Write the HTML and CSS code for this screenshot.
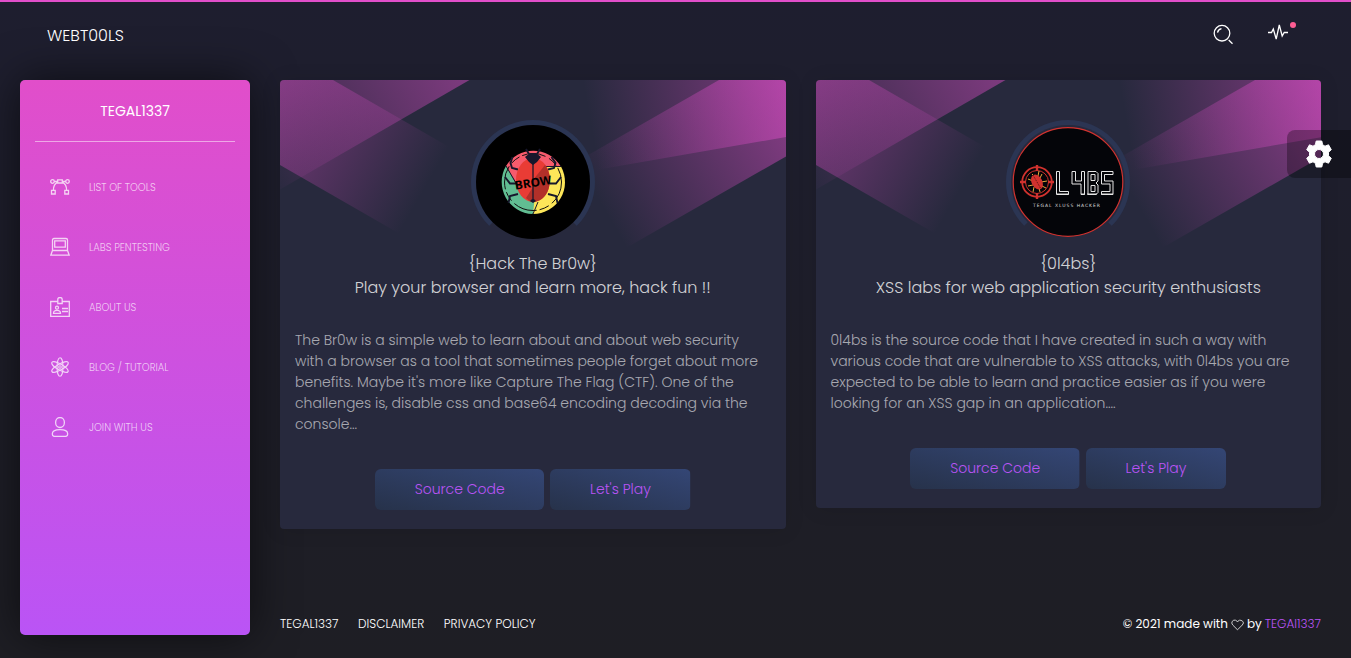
FILE: index.html
```
<!DOCTYPE html>
<html lang="en">
<head>
<meta charset="utf-8">
<title>WEBT00LS</title>
<link rel="stylesheet" href="styles.css">
</head>
<body>
<svg class="defs" width="0" height="0">
  <defs>
    <linearGradient id="beamA" gradientUnits="userSpaceOnUse" x1="-70" y1="0" x2="180" y2="0" gradientTransform="rotate(30)"><stop offset="0" stop-color="#e14eca" stop-opacity=".6"/><stop offset="1" stop-color="#e14eca" stop-opacity="0"/></linearGradient>
    <linearGradient id="beamB" gradientUnits="userSpaceOnUse" x1="228" y1="0" x2="-65" y2="0" gradientTransform="rotate(-30)"><stop offset="0" stop-color="#e14eca" stop-opacity=".6"/><stop offset="1" stop-color="#e14eca" stop-opacity="0"/></linearGradient>
    <linearGradient id="beamC" gradientUnits="userSpaceOnUse" x1="466" y1="0" x2="216" y2="0" gradientTransform="rotate(-30)"><stop offset="0" stop-color="#e14eca" stop-opacity=".6"/><stop offset="1" stop-color="#e14eca" stop-opacity="0"/></linearGradient>
    <linearGradient id="beamD" gradientUnits="userSpaceOnUse" x1="548" y1="0" x2="298" y2="0" gradientTransform="rotate(-10)"><stop offset="0" stop-color="#e14eca" stop-opacity=".6"/><stop offset="1" stop-color="#e14eca" stop-opacity="0"/></linearGradient>
    <g id="beams">
      <path fill="url(#beamA)" d="M0 0H53L170 67.500L120 154L0 85Z"/>
      <path fill="url(#beamB)" d="M0 0H189.500L0 109.500Z"/>
      <path fill="url(#beamC)" d="M439 0H506V76.500L346 168L296 82Z"/>
      <path fill="url(#beamD)" d="M303 0H506V57L319 89.500Z"/>
    </g>
  </defs>
</svg>
<header class="topbar">
  <a class="brand">WEBT00LS</a>
  <div class="actions">
    <svg class="search" width="22" height="22" viewBox="0 0 22 22"><circle cx="9" cy="9.200" r="7.800"/><path d="M4.500 8.700A5 5 0 0 1 8.500 4.700M15.700 16L19.500 19.700"/></svg>
    <div class="pulse">
      <svg width="22" height="20" viewBox="0 0 22 20"><path d="M1 10.500H4.500L6.300 7L9.200 17L12.300 3L15.200 14L17.200 10.500H21"/></svg>
      <i class="dot"></i>
    </div>
  </div>
</header>
<div class="shell">
  <aside class="sidebar">
    <div class="logo"><span>TEGAL1337</span></div>
    <nav>
      <a><svg viewBox="0 0 20 20"><circle cx="2.500" cy="4.500" r="1.800"/><circle cx="17.500" cy="4.500" r="1.800"/><path d="M7.700 2.800h4.600v3.200H7.700zM1.500 13.300h3.700V17H1.500zM14.800 13.300h3.700V17h-3.700zM4.200 4.500h3.500M12.300 4.500h3.500M3.400 13.300C3.400 8.800 5 6.500 7.700 5.200M16.600 13.300C16.600 8.800 15 6.500 12.300 5.200"/></svg><span>LIST OF TOOLS</span></a>
      <a><svg viewBox="0 0 20 20"><path d="M2.500 13.500V3q0-1.500 1.500-1.500h12q1.500 0 1.500 1.500v10.500M4.700 3.800h10.600v6.400H4.700zM2.500 13.500h15l1.700 4.700H.8z"/></svg><span>LABS PENTESTING</span></a>
      <a><svg viewBox="0 0 20 20"><path d="M7.800 4.500H.7v14.800h18.600V4.500h-7.100M7.800 2.500q0-2 2.200-2t2.200 2v4H7.800zM12 11.500h6M12 14.500h6M3.500 16.300q0-3 3.500-3t3.500 3z"/><circle cx="7" cy="10.700" r="1.500"/></svg><span>ABOUT US</span></a>
      <a><svg class="atom" viewBox="0 0 20 20"><ellipse cx="10" cy="10" rx="3" ry="9.300"/><ellipse cx="10" cy="10" rx="3" ry="9.300" transform="rotate(60 10 10)"/><ellipse cx="10" cy="10" rx="3" ry="9.300" transform="rotate(120 10 10)"/><circle cx="10" cy="10" r="1.300"/></svg><span>BLOG / TUTORIAL</span></a>
      <a><svg viewBox="0 0 20 20"><ellipse cx="10" cy="5.500" rx="4.400" ry="5"/><path d="M2.300 17C2.300 13.800 5 12.700 10 12.700s7.700 1.100 7.700 4.300q0 2.400-2.200 2.400h-11Q2.300 19.400 2.300 17z"/></svg><span>JOIN WITH US</span></a>
    </nav>
  </aside>
  <div class="main">
    <div class="cards">
      <article class="card">
        <svg class="rays" width="506" height="190" viewBox="0 0 506 190"><use href="#beams"/></svg>
        <div class="avatar">
          <svg width="114" height="114" viewBox="0 0 114 114">
            <circle cx="57" cy="57" r="57" fill="#000"/>
            <path fill="#f65b6d" d="M57 57L40 59L30 41A32 32 0 0 1 84.500 41H66z"/>
            <path fill="#61bd92" d="M57 57L40 59L30 41A32 32 0 0 0 56.500 89L66 72z"/>
            <path fill="#fde659" d="M62 41.500H85A32 32 0 0 1 57 89z"/>
            <path fill="none" stroke="#17172c" d="M30 41L40 58M70 41.500H85M57 89L62 77"/>
            <circle cx="57" cy="57" r="28.500" fill="none" stroke="#111" stroke-dasharray="24 4 10 3"/>
            <g fill="none" stroke="#17172c" stroke-width="1.900"><path d="M50 24l3 5M64 24l-3 5M42 44.500l-6-1.500-1.500-5 2-6M72 44.500l6-1.500 1.500-5-4-6M40 58.500H34l-5-6.500M74 58.500h6l5-6.500M42 69l-8 2-1.500 7M72 69l8 2 1.500 7"/></g>
            <ellipse cx="57" cy="55" rx="17" ry="22" fill="#e93c35"/>
            <path fill="#b23029" d="M57 55L69 40C77 49 76 76 57 77z"/>
            <path fill="#b23029" d="M57 62V77Q53 76.500 50 73z"/>
            <path fill="#17172c" d="M49 32l5-4h6l5 4-4 5-4 3-4-3zM54 76q3-4 6 0l-3 2z"/>
            <path stroke="#17172c" stroke-width="1.300" d="M57 37V77"/>
            <text x="38.500" y="62" class="bug-label" textLength="37" transform="rotate(-9 57 57)">BROW</text>
          </svg>
        </div>
        <h5><span>{Hack The Br0w}</span><span>Play your browser and learn more, hack fun !!</span></h5>
        <p class="desc"><span>The Br0w is a simple web to learn about and about web security</span><span>with a browser as a tool that sometimes people forget about more</span><span>benefits. Maybe it's more like Capture The Flag (CTF). One of the</span><span>challenges is, disable css and base64 encoding decoding via the</span><span>console...</span></p>
        <div class="buttons"><a class="btn">Source Code</a><a class="btn">Let's Play</a></div>
      </article>
      <article class="card">
        <svg class="rays" width="506" height="190" viewBox="0 0 506 190"><use href="#beams"/></svg>
        <div class="avatar">
          <svg width="114" height="114" viewBox="0 0 114 114">
            <ellipse cx="57" cy="57" rx="54.800" ry="54.300" fill="#040509" stroke="#d1322e" stroke-width="1.200"/>
            <g fill="none" stroke="#d1322e"><circle cx="26" cy="57" r="14.800" stroke-width="1.800"/><circle cx="26" cy="57" r="11.500"/><path stroke-width="2.400" d="M26 40v6M26 68v6M9 57h6M37 57h6"/></g>
            <path fill="none" stroke="#e7a73c" d="M21 49l3 3M28 46l-1 5M17 54l5 2M17 61l5-1M22 67l1-5M31 49l-2 4M36 56l-6 1M35 63l-4-2M29 67l-1-4"/>
            <ellipse cx="26" cy="57" rx="5.300" ry="8" fill="#d1322e" transform="rotate(-28 26 57)"/>
            <path stroke="#541310" stroke-dasharray="1 1" d="M22 50l8 14"/>
            <path fill="none" stroke="#999" stroke-width="1.800" d="M46 69.200H57.500M70 69.200h4M76 69.200h10M90 69.200h12"/>
            <path fill="none" stroke="#e6e6e6" d="M45.500 46.500h3v20h9v3h-12zM61 46.500v12.500h9v10.500h3.500v-23h-3v9.500h-6v-9.500zM77 46.500h8l2 2v7.500l-2 2 2 2v7.500l-2 2h-8zM80 49.500v6h4v-6zM80 60.500v6h4v-6zM102 46.500H90.500v12.500h8.500v7.500h-8.500v3h11.500v-13.500h-8.500v-6.500h8.500z"/>
            <text x="22" y="82" class="lab-label" textLength="67">TEGAL XLUSS HACKER</text>
          </svg>
        </div>
        <h5><span>{0l4bs}</span><span>XSS labs for web application security enthusiasts</span></h5>
        <p class="desc"><span>0l4bs is the source code that I have created in such a way with</span><span>various code that are vulnerable to XSS attacks, with 0l4bs you are</span><span>expected to be able to learn and practice easier as if you were</span><span>looking for an XSS gap in an application....</span></p>
        <div class="buttons"><a class="btn">Source Code</a><a class="btn">Let's Play</a></div>
      </article>
    </div>
    <footer>
      <div class="links"><a>TEGAL1337</a><a>DISCLAIMER</a><a>PRIVACY POLICY</a></div>
      <div class="copy"><span>© 2021 made with</span><svg width="13" height="12" viewBox="0 0 13 12"><path d="M6.500 10.800L1.700 6Q0 4 1.300 2.300T4.500 1.200Q5.900 1.500 6.500 3Q7.100 1.500 8.500 1.200T11.700 2.300T11.300 6z"/></svg><span>by</span><a>TEGAl1337</a></div>
    </footer>
  </div>
</div>
<div class="settings"><svg width="28" height="28" viewBox="0 0 28 28"><path fill="#fff" fill-rule="evenodd" stroke="#fff" stroke-linejoin="round" d="M11.200 1h5.600l.8 3.700 2.400 1.500 3.500-1.400 2.800 4.900-2.800 2.500v3.600l2.800 2.500-2.800 4.900-3.500-1.400-2.400 1.500-.8 3.700h-5.600l-.8-3.700L8 21.800l-3.500 1.400-2.800-4.900 2.800-2.500v-3.600L1.700 9.700l2.800-4.900L8 6.200l2.400-1.500zM14 9.500a4.500 4.500 0 1 0 0 9a4.500 4.500 0 1 0 0-9"/></svg></div>
</body>
</html>
```
FILE: styles.css
```
* { box-sizing: border-box; }
body {
  margin: 0;
  height: 658px;
  overflow: hidden;
  border-top: 2px solid #e14eca;
  background: linear-gradient(#1e1e2f, #1e1e24);
  font-family: Poppins, Inter, "Open Sans", sans-serif;
  font-weight: 300;
  font-size: 14px;
  color: #fff;
}
.defs { position: absolute; }
svg { display: block; flex: none; }
.topbar {
  height: 78px;
  padding: 0 54px 0 47px;
  display: flex;
  justify-content: space-between;
}
.brand { font-size: 16px; line-height: 24px; padding-top: 22px; }
.actions { display: flex; gap: 32px; padding-top: 22px; }
.actions svg { fill: none; stroke: #fff; stroke-width: 1.3; }
.pulse { position: relative; width: 30px; }
.pulse svg { margin-top: -2px; }
.dot { position: absolute; left: 23px; top: -2px; width: 6px; height: 6px; border-radius: 50%; background: #fd5d93; }
.shell { display: flex; padding: 0 30px 0 20px; gap: 30px; }
.sidebar {
  flex: none;
  width: 230px;
  height: 555px;
  padding: 0 15px;
  border-radius: 5px;
  background: linear-gradient(0deg, #ba54f5, #e14eca);
  box-shadow: 0 0 45px rgba(0, 0, 0, .6);
}
.logo { height: 62px; padding-top: 20px; line-height: 22px; text-align: center; border-bottom: 1px solid rgba(255, 255, 255, .5); font-weight: 400; }
nav { padding-top: 30px; }
nav a { display: flex; align-items: center; height: 30px; margin-bottom: 30px; padding-left: 15px; gap: 19px; font-size: 10px; line-height: 30px; color: rgba(255, 255, 255, .7); }
nav span { padding-top: 1px; }
nav svg { width: 20px; height: 20px; fill: none; stroke: #fff; stroke-width: 1.3; opacity: .75; }
nav .atom { stroke-width: 1.1; }
.main { flex: 1; min-width: 0; display: flex; flex-direction: column; justify-content: space-between; height: 555px; }
.cards { display: flex; gap: 30px; align-items: flex-start; }
.card {
  position: relative;
  flex: 1;
  min-width: 0;
  padding: 40px 15px 19px;
  border-radius: 4px;
  overflow: hidden;
  background: #27293d;
  box-shadow: 0 1px 20px rgba(0, 0, 0, .1);
}
.rays { position: absolute; top: 0; left: 0; }
.avatar { position: relative; width: 124px; height: 124px; margin: 0 auto; border: 5px solid #2b3553; border-bottom-color: transparent; border-radius: 50%; }
.bug-label { font: bold 12px "Noto Sans", sans-serif; fill: #000; }
.lab-label { font: 4.5px "DejaVu Sans", sans-serif; fill: #ddd; }
h5 { position: relative; margin: 8px 0 0; font-size: 16px; line-height: 24px; font-weight: 300; text-align: center; color: rgba(255, 255, 255, .8); white-space: nowrap; }
h5 span { display: block; }
.desc { margin: 30px 0 34px; line-height: 21px; color: rgba(255, 255, 255, .6); white-space: nowrap; }
.desc span { display: block; }
.buttons { display: flex; justify-content: center; gap: 6px; }
.btn {
  height: 41px;
  padding: 0 39.7px;
  line-height: 40px;
  border-radius: 6px;
  color: #ba54f5;
  background: linear-gradient(to bottom left, #344675, #263148, #344675) top right / 210% 210%;
}
footer { display: flex; justify-content: space-between; align-items: center; height: 22px; font-size: 12px; white-space: nowrap; }
.links { display: flex; gap: 19.6px; }
.copy { display: flex; align-items: center; gap: 3px; font-weight: 400; }
.copy svg { fill: none; stroke: #ccc; margin-top: 2px; }
.copy a { color: #ba54f5; font-weight: 300; }
.settings { position: absolute; top: 130px; right: 0; width: 64px; height: 48px; padding: 10px 18px; border-radius: 8px 0 0 8px; background: rgba(0, 0, 0, .3); }
```
